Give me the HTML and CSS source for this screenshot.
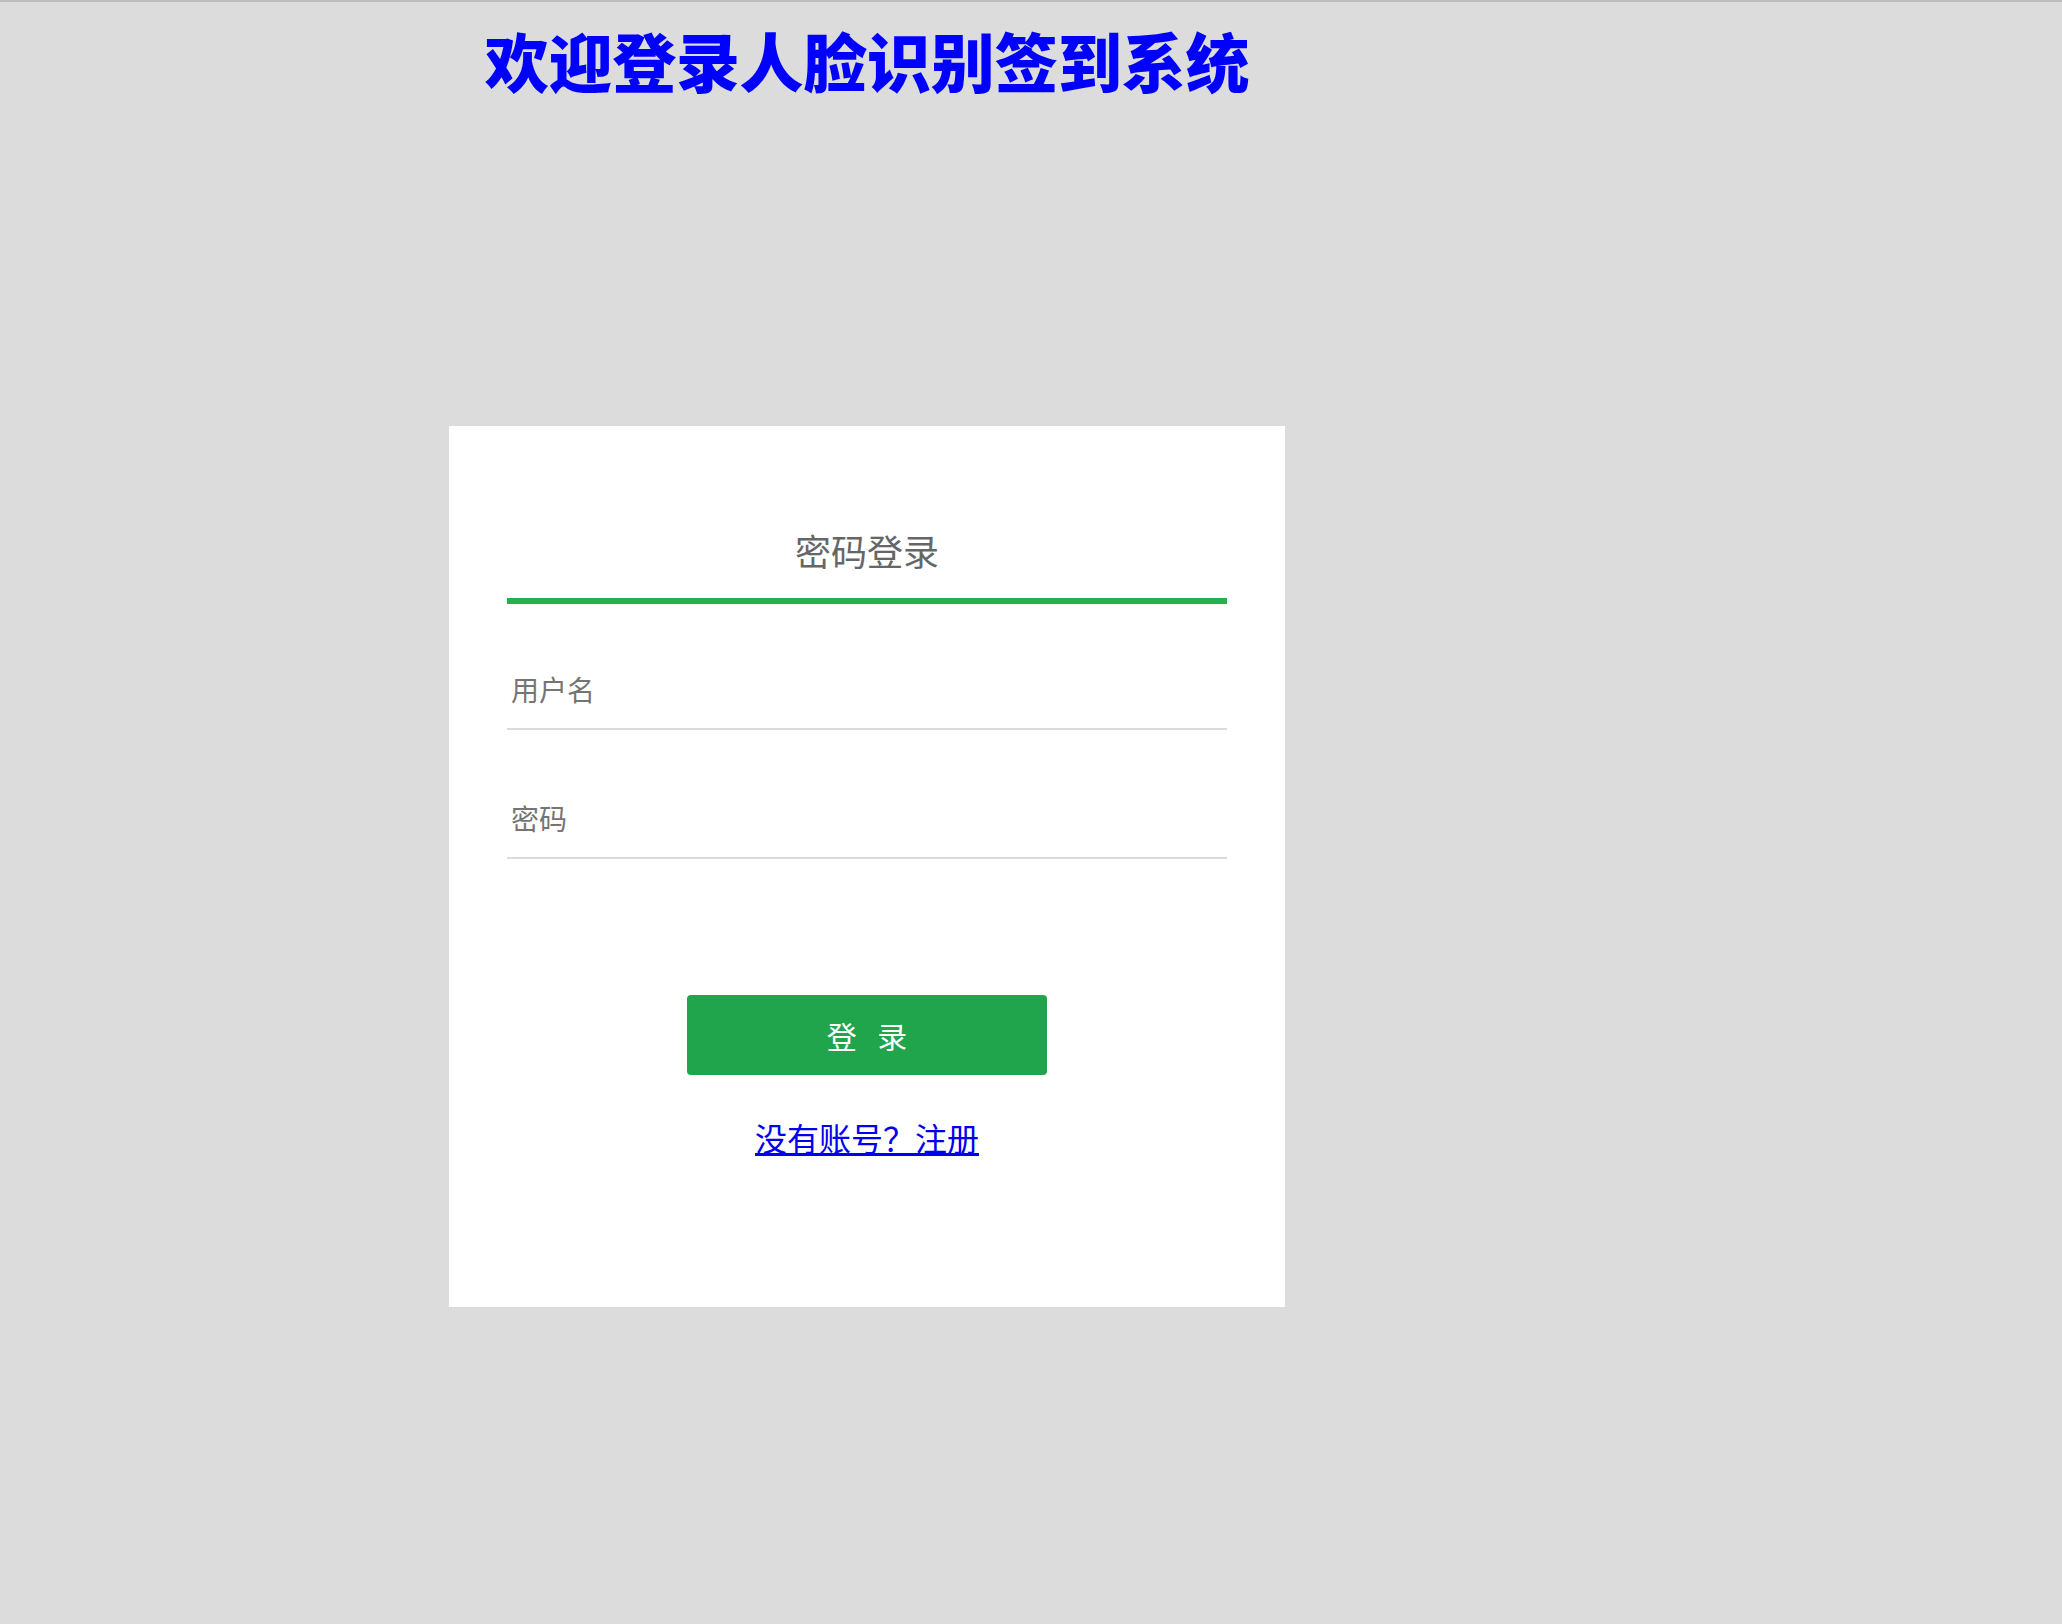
FILE: index.html
```html
<!DOCTYPE html>
<html>
<head>
	<meta charset="utf-8">
	<meta name="viewport" content="width=device-width, initial-scale=1">
	<title>人脸识别签到系统</title>
	<link rel="stylesheet" href="styles.css">
</head>
<body>
	<div class="page">
		<h1 class="title">欢迎登录人脸识别签到系统</h1>

		<!-- login card -->
		<div class="card">
			<div class="tab">密码登录</div>
			<form class="form" action="#">
				<input class="field" type="text" name="username" placeholder="用户名">
				<input class="field field-pwd" type="password" name="password" placeholder="密码">
				<button class="btn" type="button">登 录</button>
				<a class="link" href="#">没有账号？注册</a>
			</form>
		</div>
	</div>
</body>
</html>
```

FILE: styles.css
```css
* {
  box-sizing: border-box;
  margin: 0;
  padding: 0;
}
body {
  background: #dcdcdc;
  border-top: 2px solid #bcbcbc;
  min-height: 100vh;
  font-family: "Noto Sans CJK SC", "Noto Sans", sans-serif;
}

/* the whole block sits left of center, as in the original page */
.page {
  width: 836px;
  margin-left: 449px;
}
.title {
  margin-top: 25px;
  font-size: 64px;
  line-height: 64px;
  font-weight: 900;
  color: #0000ff;
  text-align: center;
  letter-spacing: -0.3px;
}

.card {
  margin-top: 335px;
  background: #fff;
  padding: 106px 58px 0;
  height: 881px;
}
.tab {
  font-size: 36px;
  line-height: 36px;
  color: #666;
  text-align: center;
  padding-bottom: 30px;
  border-bottom: 6px solid #22b14c;
}

.form {
  display: flex;
  flex-direction: column;
  align-items: center;
}
.field {
  width: 100%;
  height: 70px;
  margin-top: 56px;
  padding: 0 4px 10px;
  border: none;
  border-bottom: 2px solid #dcdcdc;
  outline: none;
  font-family: inherit;
  font-size: 28px;
  color: #333;
  background: transparent;
}
.field::placeholder {
  color: #757575;
}
.field-pwd {
  margin-top: 59px;
}
.btn {
  margin-top: 136px;
  width: 360px;
  height: 80px;
  border: none;
  border-radius: 4px;
  background: #20a44c;
  color: #fff;
  font-family: inherit;
  font-size: 30px;
  letter-spacing: 7px;
  text-indent: 7px;
  cursor: pointer;
}
.link {
  margin-top: 45px;
  font-size: 32px;
  line-height: 34px;
  color: #0000ee;
}
```
